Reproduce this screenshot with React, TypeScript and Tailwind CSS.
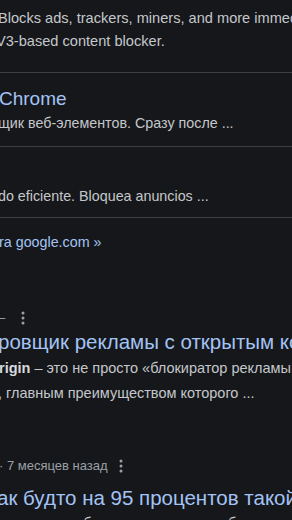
import React from 'react';

// Обрезанный фрагмент выдачи поиска в тёмной теме
const Divider = () => <div className="h-px w-full bg-[#3c3f43]" />;

const Kebab = () => (
  <svg width="4" height="14" viewBox="0 0 4 14" className="inline-block">
    <circle cx="2" cy="2" r="1.5" fill="#9aa0a6" />
    <circle cx="2" cy="7" r="1.5" fill="#9aa0a6" />
    <circle cx="2" cy="12" r="1.5" fill="#9aa0a6" />
  </svg>
);

export default function App() {
  return (
    <div
      className="h-[520px] w-full overflow-hidden bg-[#16171a] text-[#c4c7cc]"
      style={{ fontFamily: '"Liberation Sans", Arial, sans-serif' }}
    >
      {/* Первый результат */}
      <div className="pt-[7px] text-[14.6px] leading-[23px] whitespace-nowrap">
        <p className="-ml-[2px]">Blocks ads, trackers, miners, and more immediately</p>
        <p className="-ml-[4px]">V3-based content blocker.</p>
      </div>
      <div className="mt-[19px]">
        <Divider />
      </div>

      {/* Chrome */}
      <div className="mt-[13px] whitespace-nowrap">
        <p className="-ml-[1px] text-[19px] leading-[26px] text-[#a3c3f5]">Chrome</p>
        <p className="-ml-[2px] text-[14.3px] leading-[22px]">щик веб-элементов. Сразу после ...</p>
      </div>
      <div className="mt-[12px]">
        <Divider />
      </div>

      {/* Испанский результат */}
      <div className="mt-[38px] whitespace-nowrap">
        <p className="-ml-[2px] text-[14.3px] leading-[22px]">do eficiente. Bloquea anuncios ...</p>
      </div>
      <div className="mt-[10px]">
        <Divider />
      </div>

      <div className="mt-[13px] whitespace-nowrap">
        <p className="-ml-[1px] text-[14.3px] leading-[22px] text-[#a3c3f5]">ra google.com »</p>
      </div>

      {/* Результат на русском */}
      <div className="mt-[55px] flex items-center gap-[16px] whitespace-nowrap text-[13px] leading-[20px] text-[#9aa0a6]">
        <span className="-ml-[2px]">–</span>
        <Kebab />
      </div>
      <div className="whitespace-nowrap">
        <p className="-ml-[2px] text-[20.5px] leading-[28px] text-[#a3c3f5]">ровщик рекламы с открытым кодом</p>
        <p className="-ml-[1px] text-[14.5px] leading-[25px]">
          <span className="font-bold text-[#d6d9de]">rigin</span> – это не просто «блокиратор рекламы:
        </p>
        <p className="-ml-[2px] text-[14.5px] leading-[25px]">, главным преимуществом которого ...</p>
      </div>

      {/* Видео */}
      <div className="mt-[50px] flex items-center gap-[11px] whitespace-nowrap text-[13px] leading-[20px] text-[#9aa0a6]">
        <span className="-ml-[1px]">· 7 месяцев назад</span>
        <Kebab />
      </div>
      <div className="mt-[8px] whitespace-nowrap">
        <p className="-ml-[3px] text-[20.5px] leading-[28px] text-[#a3c3f5]">ак будто на 95 процентов такой</p>
        <p className="-ml-[2px] text-[14.5px] leading-[22px]">… выглядит блокирует рекламу и без</p>
      </div>
    </div>
  );
}
